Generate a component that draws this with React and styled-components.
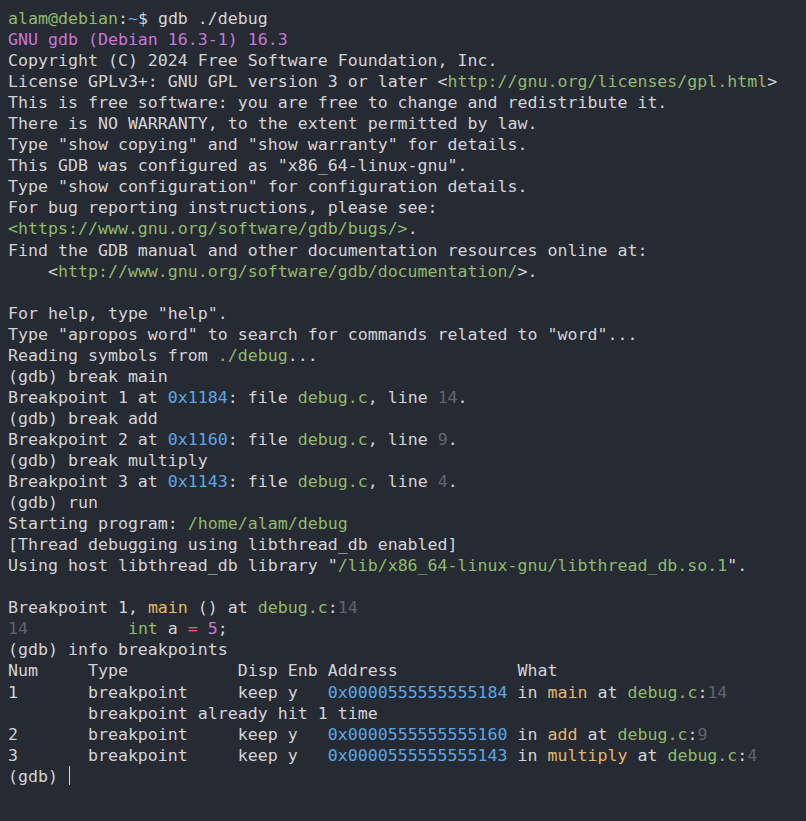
import React from "react";
import styled, { createGlobalStyle } from "styled-components";

const palette = {
  fg: "#d2d4d8",
  green: "#8fbb6c",
  purple: "#c678dd",
  blue: "#5aa8e6",
  yellow: "#e0b86e",
  gray: "#5f6570",
  red: "#e06c75",
};

const Global = createGlobalStyle`
  html, body { margin: 0; padding: 0; background: #262a33; }
  body { min-height: 821px; }
`;

const Terminal = styled.div`
  background: #262a33;
  min-height: 821px;
  box-sizing: border-box;
  padding: 8px 8px 0 8px;
  font-family: "DejaVu Sans Mono", "Liberation Mono", monospace;
  font-size: 16.6px;
  line-height: 21.06px;
  color: ${palette.fg};
`;

const Line = styled.div`
  white-space: pre;
  height: 21.06px;
`;

const C = styled.span`
  color: ${(p) => palette[p.$c] || palette.fg};
`;

const Cursor = styled.span`
  display: inline-block;
  width: 1.5px;
  height: 19px;
  background: #e6d3b3;
  vertical-align: middle;
  margin-left: 1px;
  margin-top: -3px;
`;

const lines = [
  [["green", "alam@debian"], ["fg", ":"], ["blue", "~"], ["fg", "$ gdb ./debug"]],
  [["purple", "GNU gdb (Debian 16.3-1) 16.3"]],
  [["fg", "Copyright (C) 2024 Free Software Foundation, Inc."]],
  [["fg", "License GPLv3+: GNU GPL version 3 or later <"], ["green", "http://gnu.org/licenses/gpl.html"], ["fg", ">"]],
  [["fg", "This is free software: you are free to change and redistribute it."]],
  [["fg", "There is NO WARRANTY, to the extent permitted by law."]],
  [["fg", 'Type "show copying" and "show warranty" for details.']],
  [["fg", 'This GDB was configured as "x86_64-linux-gnu".']],
  [["fg", 'Type "show configuration" for configuration details.']],
  [["fg", "For bug reporting instructions, please see:"]],
  [["green", "<https://www.gnu.org/software/gdb/bugs/>"], ["fg", "."]],
  [["fg", "Find the GDB manual and other documentation resources online at:"]],
  [["fg", "    <"], ["green", "http://www.gnu.org/software/gdb/documentation/"], ["fg", ">."]],
  [],
  [["fg", 'For help, type "help".']],
  [["fg", 'Type "apropos word" to search for commands related to "word"...']],
  [["fg", "Reading symbols from "], ["green", "./debug"], ["fg", "..."]],
  [["fg", "(gdb) break main"]],
  [["fg", "Breakpoint 1 at "], ["blue", "0x1184"], ["fg", ": file "], ["green", "debug.c"], ["fg", ", line "], ["gray", "14"], ["fg", "."]],
  [["fg", "(gdb) break add"]],
  [["fg", "Breakpoint 2 at "], ["blue", "0x1160"], ["fg", ": file "], ["green", "debug.c"], ["fg", ", line "], ["gray", "9"], ["fg", "."]],
  [["fg", "(gdb) break multiply"]],
  [["fg", "Breakpoint 3 at "], ["blue", "0x1143"], ["fg", ": file "], ["green", "debug.c"], ["fg", ", line "], ["gray", "4"], ["fg", "."]],
  [["fg", "(gdb) run"]],
  [["fg", "Starting program: "], ["green", "/home/alam/debug"]],
  [["fg", "[Thread debugging using libthread_db enabled]"]],
  [["fg", 'Using host libthread_db library "'], ["green", "/lib/x86_64-linux-gnu/libthread_db.so.1"], ["fg", '".']],
  [],
  [["fg", "Breakpoint 1, "], ["yellow", "main"], ["fg", " () at "], ["green", "debug.c"], ["fg", ":"], ["gray", "14"]],
  [["gray", "14"], ["fg", "          "], ["green", "int"], ["fg", " a "], ["red", "="], ["fg", " "], ["purple", "5"], ["fg", ";"]],
  [["fg", "(gdb) info breakpoints"]],
  [["fg", "Num     Type           Disp Enb Address            What"]],
  [["fg", "1       breakpoint     keep y   "], ["blue", "0x0000555555555184"], ["fg", " in "], ["yellow", "main"], ["fg", " at "], ["green", "debug.c"], ["fg", ":"], ["gray", "14"]],
  [["fg", "        breakpoint already hit 1 time"]],
  [["fg", "2       breakpoint     keep y   "], ["blue", "0x0000555555555160"], ["fg", " in "], ["yellow", "add"], ["fg", " at "], ["green", "debug.c"], ["fg", ":"], ["gray", "9"]],
  [["fg", "3       breakpoint     keep y   "], ["blue", "0x0000555555555143"], ["fg", " in "], ["yellow", "multiply"], ["fg", " at "], ["green", "debug.c"], ["fg", ":"], ["gray", "4"]],
];

export default function App() {
  return (
    <>
      <Global />
      <Terminal>
        {lines.map((segs, i) => (
          <Line key={i}>
            {segs.length === 0 ? " " : segs.map(([c, t], j) => (
              <C key={j} $c={c}>{t}</C>
            ))}
          </Line>
        ))}
        <Line>
          <C $c="fg">(gdb) </C>
          <Cursor />
        </Line>
      </Terminal>
    </>
  );
}
